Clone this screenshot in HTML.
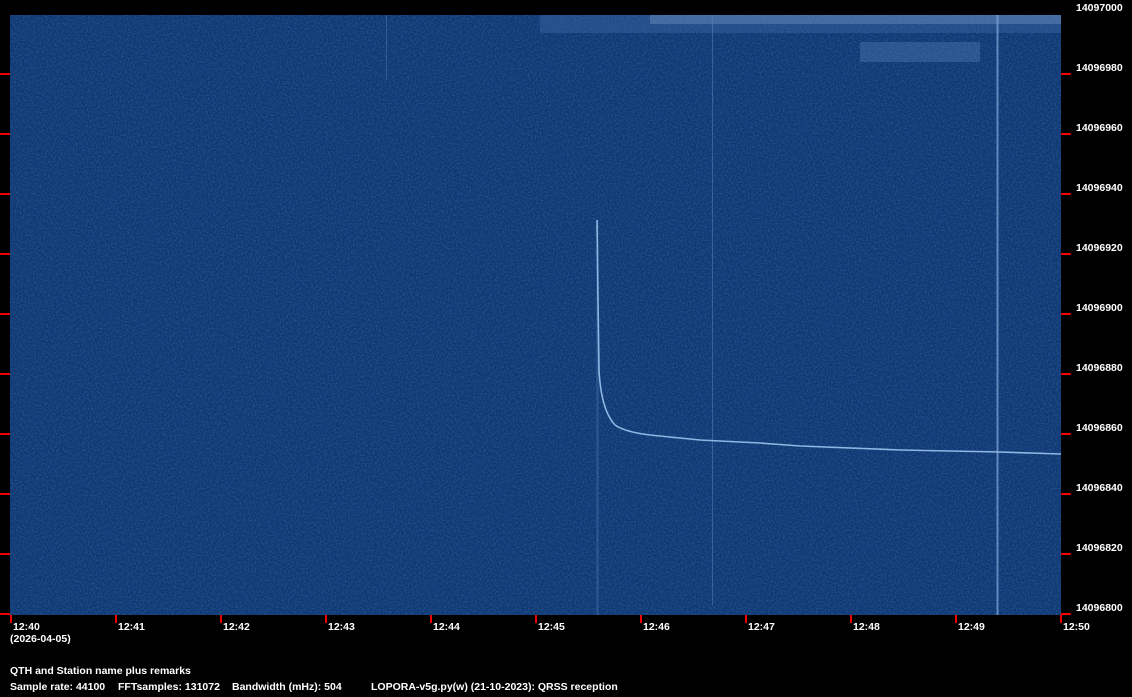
<!DOCTYPE html>
<html><head><style>
html,body{margin:0;padding:0;background:#000;width:1132px;height:697px;overflow:hidden}
svg{display:block}
text{font-family:"Liberation Sans",sans-serif;font-weight:bold;font-size:10.5px;fill:#fff}
</style></head><body>
<svg width="1132" height="697" viewBox="0 0 1132 697">
<defs>
<filter id="n" x="0" y="0" width="100%" height="100%">
<feTurbulence type="fractalNoise" baseFrequency="0.6" numOctaves="2" seed="3"/>
<feColorMatrix type="matrix" values="0 0 0 0 0.12  0 0 0 0 0.3  0 0 0 0 0.6  0 0 0 1.2 -0.45"/>
</filter>
</defs>
<rect x="0" y="0" width="1132" height="697" fill="#000"/>
<rect x="10" y="15" width="1051" height="600" fill="#0f3873"/>
<rect x="10" y="15" width="1051" height="600" filter="url(#n)" opacity="0.5"/>
<rect x="540" y="15" width="521" height="18" fill="#3f6ca8" opacity="0.4"/>
<rect x="650" y="15" width="411" height="9" fill="#8fb0dc" opacity="0.3"/>
<rect x="860" y="42" width="120" height="20" fill="#5a86c0" opacity="0.35"/>
<line x1="997.5" y1="15" x2="997.5" y2="615" stroke="#7fa8d8" stroke-width="2" opacity="0.7"/>
<line x1="712.5" y1="15" x2="712.5" y2="605" stroke="#5a84bc" stroke-width="1" opacity="0.5"/>
<line x1="386.5" y1="15" x2="386.5" y2="80" stroke="#5a84bc" stroke-width="1" opacity="0.4"/>
<line x1="597.5" y1="220" x2="597.5" y2="615" stroke="#4f7cb6" stroke-width="2" opacity="0.4"/>
<path d="M597 220 L598 300 L599 370 Q601 410 615 425 Q625 432 650 435 L700 440 L760 443 L800 446 L900 450 L1000 452 L1061 454" fill="none" stroke="#8fb6e2" stroke-width="1.6"/>
<g fill="#e00">
<rect x="0" y="73" width="10" height="2"/><rect x="0" y="133" width="10" height="2"/>
<rect x="0" y="193" width="10" height="2"/><rect x="0" y="253" width="10" height="2"/>
<rect x="0" y="313" width="10" height="2"/><rect x="0" y="373" width="10" height="2"/>
<rect x="0" y="433" width="10" height="2"/><rect x="0" y="493" width="10" height="2"/>
<rect x="0" y="553" width="10" height="2"/><rect x="0" y="613" width="10" height="2"/>
<rect x="1061" y="73" width="10" height="2"/><rect x="1061" y="133" width="10" height="2"/>
<rect x="1061" y="193" width="10" height="2"/><rect x="1061" y="253" width="10" height="2"/>
<rect x="1061" y="313" width="10" height="2"/><rect x="1061" y="373" width="10" height="2"/>
<rect x="1061" y="433" width="10" height="2"/><rect x="1061" y="493" width="10" height="2"/>
<rect x="1061" y="553" width="10" height="2"/><rect x="1061" y="613" width="10" height="2"/>
<rect x="10" y="615" width="2" height="8"/><rect x="115" y="615" width="2" height="8"/>
<rect x="220" y="615" width="2" height="8"/><rect x="325" y="615" width="2" height="8"/>
<rect x="430" y="615" width="2" height="8"/><rect x="535" y="615" width="2" height="8"/>
<rect x="640" y="615" width="2" height="8"/><rect x="745" y="615" width="2" height="8"/>
<rect x="850" y="615" width="2" height="8"/><rect x="955" y="615" width="2" height="8"/>
<rect x="1060" y="615" width="2" height="8"/>
</g>
<g>
<text x="1076" y="11">14097000</text><text x="1076" y="71">14096980</text>
<text x="1076" y="131">14096960</text><text x="1076" y="191">14096940</text>
<text x="1076" y="251">14096920</text><text x="1076" y="311">14096900</text>
<text x="1076" y="371">14096880</text><text x="1076" y="431">14096860</text>
<text x="1076" y="491">14096840</text><text x="1076" y="551">14096820</text>
<text x="1076" y="611">14096800</text>
<text x="13" y="630">12:40</text><text x="118" y="630">12:41</text>
<text x="223" y="630">12:42</text><text x="328" y="630">12:43</text>
<text x="433" y="630">12:44</text><text x="538" y="630">12:45</text>
<text x="643" y="630">12:46</text><text x="748" y="630">12:47</text>
<text x="853" y="630">12:48</text><text x="958" y="630">12:49</text>
<text x="1063" y="630">12:50</text>
<text x="10" y="642">(2026-04-05)</text>
<text x="10" y="674">QTH and Station name plus remarks</text>
<text x="10" y="690">Sample rate: 44100</text>
<text x="118" y="690">FFTsamples: 131072</text>
<text x="232" y="690">Bandwidth (mHz): 504</text>
<text x="371" y="690">LOPORA-v5g.py(w) (21-10-2023): QRSS reception</text>
</g>
</svg>
</body></html>
